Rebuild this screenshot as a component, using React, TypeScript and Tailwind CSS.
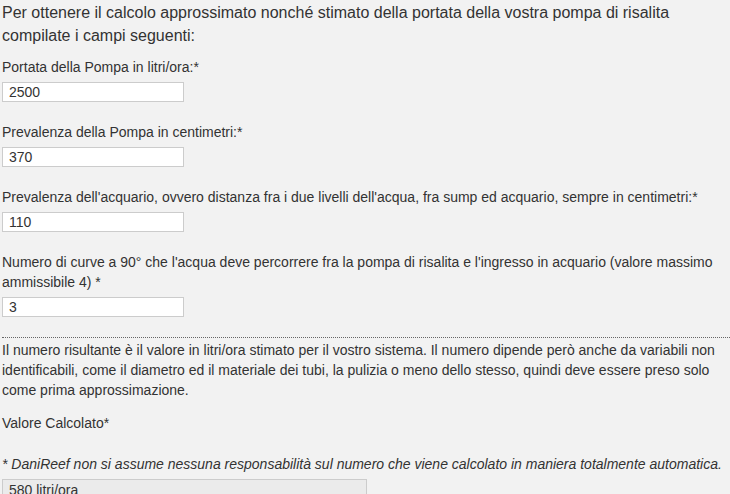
import React from "react";

const fields = [
  { label: "Portata della Pompa in litri/ora:*", value: "2500" },
  { label: "Prevalenza della Pompa in centimetri:*", value: "370" },
  {
    label:
      "Prevalenza dell'acquario, ovvero distanza fra i due livelli dell'acqua, fra sump ed acquario, sempre in centimetri:*",
    value: "110",
  },
  {
    label:
      "Numero di curve a 90° che l'acqua deve percorrere fra la pompa di risalita e l'ingresso in acquario (valore massimo ammissibile 4) *",
    value: "3",
  },
];

const App = () => {
  return (
    <div className="min-h-[494px] w-[730px] overflow-hidden bg-[#f2f2f2] pl-[2px] font-['Liberation_Sans',Arial,sans-serif] text-[#333333]">
      <div className="pr-[2px]">
        <p className="pt-[1px] text-[16px] leading-[23px]">
          Per ottenere il calcolo approssimato nonché stimato della portata della
          vostra pompa di risalita compilate i campi seguenti:
        </p>

        <div className="mt-[10px] flex flex-col gap-[20px]">
          {fields.map((f) => (
            <div key={f.value} className="flex flex-col gap-[5px]">
              <label className="text-[14px] leading-[20px]">{f.label}</label>
              <input
                type="text"
                defaultValue={f.value}
                className="h-[20px] w-[182px] border border-[#cccccc] bg-white px-[6px] text-[14px] leading-[18px] text-[#333333] outline-none"
              />
            </div>
          ))}
        </div>
      </div>

      <div className="mt-[20px] border-t border-dotted border-[#666666]" />

      <div className="pr-[2px]">
        <p className="mt-[2px] text-[14px] leading-[20px]">
          Il numero risultante è il valore in litri/ora stimato per il vostro
          sistema. Il numero dipende però anche da variabili non identificabili,
          come il diametro ed il materiale dei tubi, la pulizia o meno dello
          stesso, quindi deve essere preso solo come prima approssimazione.
        </p>

        <p className="mt-[13px] text-[14px] leading-[20px]">Valore Calcolato*</p>

        <p className="mt-[21px] text-[14px] italic leading-[20px]">
          * DaniReef non si assume nessuna responsabilità sul numero che viene
          calcolato in maniera totalmente automatica.
        </p>

        <input
          type="text"
          readOnly
          defaultValue="580 litri/ora"
          className="mt-[5px] h-[22px] w-[365px] border border-[#cccccc] bg-[#ebebeb] px-[6px] text-[14px] leading-[20px] text-[#333333] outline-none"
        />
      </div>
    </div>
  );
};

export default App;
